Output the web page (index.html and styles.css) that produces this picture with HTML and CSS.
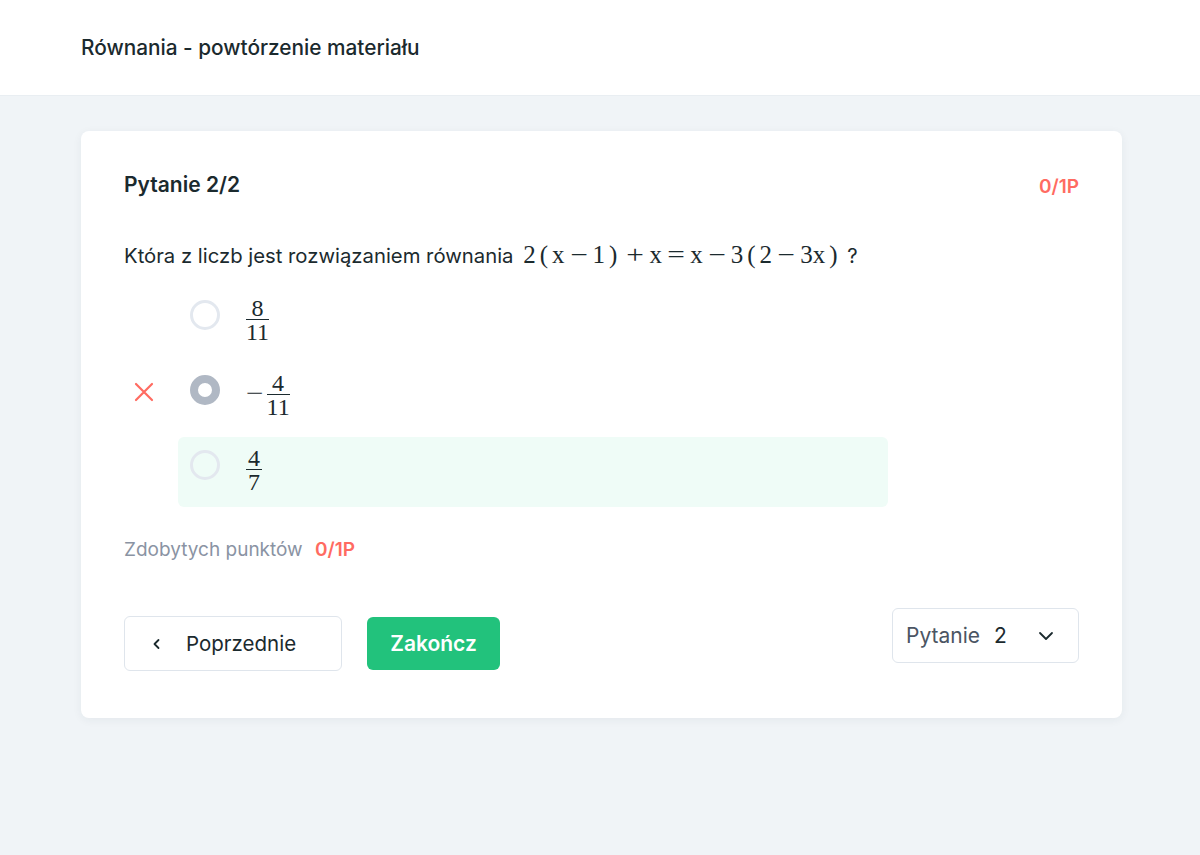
FILE: index.html
```html
<!DOCTYPE html>
<html lang="pl">
<head>
<meta charset="utf-8">
<title>Równania - powtórzenie materiału</title>
<link rel="stylesheet" href="styles.css">
</head>
<body>
<header class="topbar">
  <h1 class="topbar-title">Równania - powtórzenie materiału</h1>
</header>
<main class="page">
  <section class="card">
    <div class="card-head">
      <h2 class="q-num">Pytanie 2/2</h2>
      <span class="score">0/1P</span>
    </div>
    <p class="question">Która z liczb jest rozwiązaniem równania
      <span class="math">2<span class="p">(</span>x<span class="op">−</span>1<span class="p">)</span><span class="op">+</span>x<span class="op">=</span>x<span class="op">−</span>3<span class="p">(</span>2<span class="op">−</span>3x<span class="p">)</span></span> ?</p>
    <ul class="options">
      <li class="option">
        <span class="mark"></span>
        <div class="opt-box">
          <span class="radio"></span>
          <span class="math frac"><span class="num">8</span><span class="den">11</span></span>
        </div>
      </li>
      <li class="option">
        <span class="mark">
          <svg width="20" height="20" viewBox="0 0 20 20"><path d="M2 2 L18 18 M18 2 L2 18" stroke="#ff6b61" stroke-width="2.2" stroke-linecap="round" fill="none"/></svg>
        </span>
        <div class="opt-box">
          <span class="radio radio-checked"></span>
          <span class="math neg">−</span><span class="math frac"><span class="num">4</span><span class="den">11</span></span>
        </div>
      </li>
      <li class="option">
        <span class="mark"></span>
        <div class="opt-box opt-correct">
          <span class="radio"></span>
          <span class="math frac"><span class="num">4</span><span class="den">7</span></span>
        </div>
      </li>
    </ul>
    <p class="earned">Zdobytych punktów <span class="earned-val">0/1P</span></p>
    <div class="actions">
      <button class="btn btn-outline">
        <svg width="12" height="12" viewBox="0 0 12 12"><path d="M7.5 2 L3.5 6 L7.5 10" stroke="#1b2a2e" stroke-width="1.8" fill="none" stroke-linecap="round" stroke-linejoin="round"/></svg>
        <span>Poprzednie</span>
      </button>
      <button class="btn btn-green">Zakończ</button>
      <div class="select">
        <span class="select-label">Pytanie</span>
        <span class="select-val">2</span>
        <svg class="select-chev" width="18" height="18" viewBox="0 0 18 18"><path d="M3 6 L9 12 L15 6" stroke="#1b2a2e" stroke-width="1.8" fill="none" stroke-linecap="round" stroke-linejoin="round"/></svg>
      </div>
    </div>
  </section>
</main>
</body>
</html>
```
FILE: styles.css
```css
* { box-sizing: border-box; }
html, body { margin: 0; padding: 0; }
body {
  background: #f0f4f7;
  font-family: Inter, "Noto Sans", sans-serif;
  color: #1b2a2e;
  min-height: 855px;
}
.topbar {
  background: #fff;
  height: 96px;
  padding: 0 78px 0 81px;
  display: flex;
  align-items: center;
  border-bottom: 1px solid #e9eef2;
}
.topbar-title {
  margin: 0 0 1px;
  font-size: 20.8px;
  font-weight: 500;
}
.page {
  padding: 35px 78px 0 81px;
}
.card {
  background: #fff;
  border-radius: 8px;
  box-shadow: 0 2px 10px rgba(30, 50, 70, 0.06);
  padding: 39px 43px 47px 43px;
}
.card-head {
  display: flex;
  justify-content: space-between;
  align-items: center;
  height: 28px;
}
.q-num {
  margin: 0;
  font-size: 21px;
  font-weight: 600;
}
.score {
  font-size: 19px;
  font-weight: 600;
  color: #ff6b61;
  margin-top: 4px;
}
.question {
  margin: 43px 0 0;
  font-size: 20.3px;
  line-height: 28px;
  height: 28px;
}
.math {
  font-family: "Liberation Serif", "DejaVu Serif", serif;
  font-size: 25px;
  margin-left: 4px;
}
.math .op {
  display: inline-block;
  margin: 0 7px;
  transform: scaleX(1.25);
}
.math .p { margin: 0 4px; }
.options {
  list-style: none;
  margin: 18px 0 0;
  padding: 0;
  display: flex;
  flex-direction: column;
  gap: 5px;
}
.option {
  display: flex;
  align-items: stretch;
}
.mark {
  width: 54px;
  padding-left: 10px;
  padding-top: 20px;
}
.mark svg { display: block; }
.opt-box {
  width: 710px;
  height: 70px;
  border-radius: 6px;
  padding: 13px 12px 0;
  display: flex;
  align-items: flex-start;
}
.opt-correct { background: #effcf7; }
.radio {
  width: 30px;
  height: 30px;
  border-radius: 50%;
  border: 3px solid #e3e8ef;
  flex: none;
  margin-right: 26px;
}
.radio-checked {
  border: 8px solid #b0b8c4;
}
.frac {
  display: inline-flex;
  flex-direction: column;
  align-items: center;
  font-size: 24px;
  line-height: 20px;
  margin: -2px 0 0;
}
.frac .num {
  padding: 0 2px 1px;
  border-bottom: 1px solid #1b2a2e;
  align-self: stretch;
  text-align: center;
}
.frac .den { padding-top: 2px; }
.neg {
  display: inline-block;
  font-size: 24px;
  margin: 8px 5px 0 2px;
  line-height: 20px;
  transform: scaleX(1.3);
}
.earned {
  margin: 31px 0 0;
  font-size: 19px;
  color: #8a93a3;
  line-height: 24px;
}
.earned-val {
  color: #ff6b61;
  font-weight: 600;
  margin-left: 7px;
}
.actions {
  display: flex;
  align-items: flex-start;
  margin-top: 46px;
}
.btn {
  font-family: inherit;
  font-size: 20.5px;
  border-radius: 6px;
  cursor: pointer;
}
.btn-outline {
  margin-top: 8px;
  width: 218px;
  height: 55px;
  background: #fff;
  border: 1.5px solid #dfe5ec;
  color: #1b2a2e;
  display: flex;
  align-items: center;
  padding: 0 0 0 26px;
  gap: 23px;
}
.btn-green {
  margin: 9px 0 0 25px;
  height: 53px;
  width: 133px;
  background: #22c27c;
  border: none;
  color: #fff;
  font-weight: 600;
  font-size: 21px;
}
.select {
  margin-left: auto;
  width: 187px;
  height: 55px;
  border: 1.5px solid #dfe5ec;
  border-radius: 6px;
  display: flex;
  align-items: center;
  padding: 0 12px 0 13px;
  font-size: 21px;
}
.select-label { color: #4b5563; }
.select-val { margin-left: 14px; color: #1b2a2e; }
.select-chev { margin-left: auto; margin-right: 11px; }
```
